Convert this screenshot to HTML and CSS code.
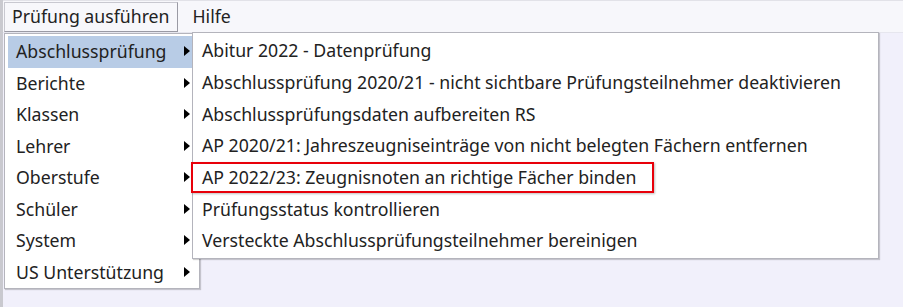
FILE: index.html
```html
<!DOCTYPE html>
<html lang="de">
<head>
<meta charset="utf-8">
<title>Menü</title>
<link rel="stylesheet" href="styles.css">
</head>
<body>
<div class="window">
  <div class="menubar">
    <div class="top-item open">Prüfung ausführen</div>
    <div class="top-item help">Hilfe</div>
  </div>
  <div class="menu main-menu">
    <div class="mi active"><span>Abschlussprüfung</span><i class="arrow"></i></div>
    <div class="mi"><span>Berichte</span><i class="arrow"></i></div>
    <div class="mi"><span>Klassen</span><i class="arrow"></i></div>
    <div class="mi"><span>Lehrer</span><i class="arrow"></i></div>
    <div class="mi"><span>Oberstufe</span><i class="arrow"></i></div>
    <div class="mi"><span>Schüler</span><i class="arrow"></i></div>
    <div class="mi"><span>System</span><i class="arrow"></i></div>
    <div class="mi"><span>US Unterstützung</span><i class="arrow"></i></div>
  </div>
  <div class="menu sub-menu">
    <div class="si">Abitur 2022 - Datenprüfung</div>
    <div class="si">Abschlussprüfung 2020/21 - nicht sichtbare Prüfungsteilnehmer deaktivieren</div>
    <div class="si">Abschlussprüfungsdaten aufbereiten RS</div>
    <div class="si">AP 2020/21: Jahreszeugniseinträge von nicht belegten Fächern entfernen</div>
    <div class="si marked">AP 2022/23: Zeugnisnoten an richtige Fächer binden</div>
    <div class="si">Prüfungsstatus kontrollieren</div>
    <div class="si">Versteckte Abschlussprüfungsteilnehmer bereinigen</div>
  </div>
</div>
</body>
</html>
```
FILE: styles.css
```css
html, body {
  margin: 0;
  padding: 0;
}
body {
  width: 903px;
  height: 307px;
  overflow: hidden;
  background: #f1f0fb;
  font-family: "Noto Sans", "Open Sans", sans-serif;
  font-size: 17.7px;
  color: #222222;
}
.window {
  position: relative;
  height: 307px;
  border-left: 3px solid #c9c9cf;
  box-sizing: border-box;
}
.menubar {
  display: flex;
  align-items: stretch;
  height: 33px;
  background: #f7f7fb;
  border-top: 1px solid #e2e2e8;
  border-bottom: 1px solid #e6e6ee;
  box-sizing: border-box;
  padding: 1px 0 0 1px;
}
.top-item {
  display: flex;
  align-items: center;
  padding: 0 7px 2px 7px;
  border: 1px solid transparent;
}
.top-item.help {
  padding-left: 14px;
}
.top-item.open {
  border-color: #c8c8d0;
  border-bottom-color: #9a9aa4;
  border-right-color: #9a9aa4;
  background: #f7f7fb;
}
.menu {
  position: absolute;
  background: #ffffff;
  border: 1px solid #b4b4bc;
  box-shadow: 1px 1px 1px rgba(0,0,0,0.18);
  box-sizing: border-box;
}
.main-menu {
  left: 1px;
  top: 33px;
  width: 196px;
  height: 256px;
  padding: 2px 3px;
}
.mi {
  display: flex;
  align-items: center;
  justify-content: space-between;
  height: 31.5px;
  padding: 0 8px 1px 8px;
  box-sizing: border-box;
}
.mi.active {
  background: #b8cce6;
}
.arrow {
  width: 0;
  height: 0;
  border-top: 5px solid transparent;
  border-bottom: 5px solid transparent;
  border-left: 6px solid #000;
  margin-right: -2px;
}
.sub-menu {
  left: 189px;
  top: 32px;
  width: 687px;
  height: 227px;
  padding: 2px;
}
.si {
  display: flex;
  align-items: center;
  height: 31.7px;
  padding: 0 7px 1px 7px;
  white-space: nowrap;
  box-sizing: border-box;
}
.si.marked {
  width: 463px;
  margin-left: -4px;
  padding-left: 9px;
  border: 2px solid #e8000a;
  box-shadow: 1px 1px 2px rgba(0,0,0,0.25);
}
```
